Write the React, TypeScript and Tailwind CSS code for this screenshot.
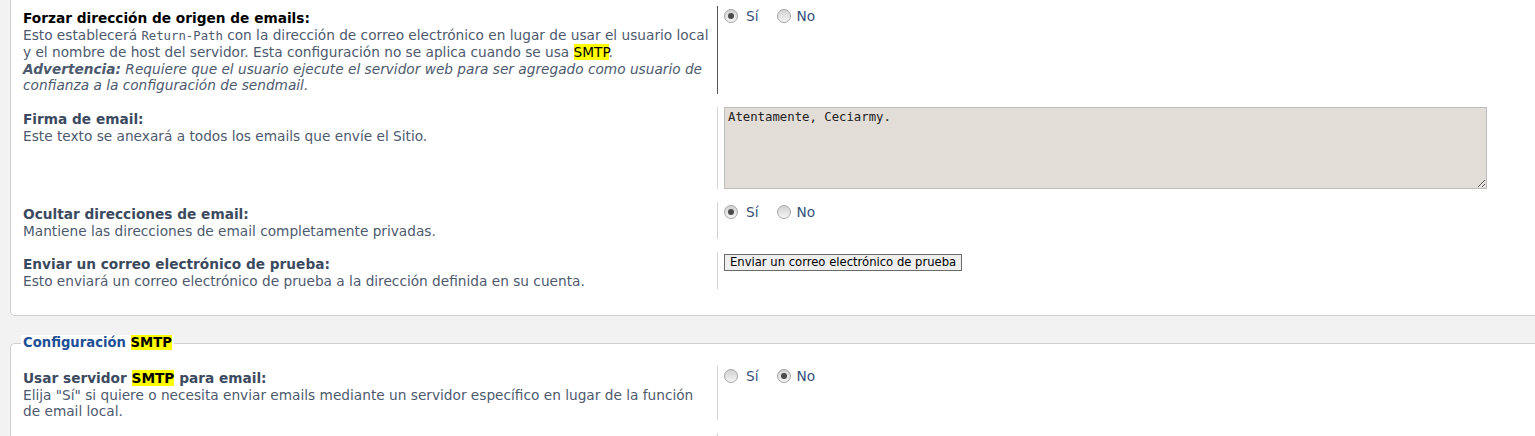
import type { ReactNode } from "react";

const sans = "font-['DejaVu_Sans','Verdana',sans-serif]";
const mono = "font-['DejaVu_Sans_Mono','Liberation_Mono',monospace]";

function Hl({ children }: { children: ReactNode }) {
  return <span className="bg-[#ffff00] text-black">{children}</span>;
}

function Radio({ checked }: { checked?: boolean }) {
  return (
    <span className="flex h-[14px] w-[14px] shrink-0 items-center justify-center rounded-full border border-[#a6a6a6] bg-gradient-to-b from-[#d2d2d2] to-[#f5f5f5]">
      {checked ? <span className="h-[6px] w-[6px] rounded-full bg-[#4a4a4a]" /> : null}
    </span>
  );
}

function YesNo({ value }: { value: "si" | "no" }) {
  return (
    <div className="mt-[2px] flex items-center text-[#34507a]">
      <Radio checked={value === "si"} />
      <span className="ml-[8px] mr-[18px]">Sí</span>
      <Radio checked={value === "no"} />
      <span className="ml-[6px]">No</span>
    </div>
  );
}

function Row({
  title,
  children,
  control,
  active,
}: {
  title: ReactNode;
  children: ReactNode;
  control: ReactNode;
  active?: boolean;
}) {
  return (
    <div className="flex [&+&]:mt-[13px]">
      <div className="w-[694px] shrink-0 pt-[4px]">
        <div className={`font-bold ${active ? "text-black" : "text-[#3c4a60]"}`}>{title}</div>
        <div className="whitespace-nowrap text-[#4d5a6e]">{children}</div>
      </div>
      <div className={`flex-1 border-l pl-[6px] ${active ? "border-[#555]" : "border-[#d3d3d3]"}`}>
        {control}
      </div>
    </div>
  );
}

export default function App() {
  return (
    <div className={`min-h-[436px] bg-[#f2f2f2] ${sans} text-[13.7px] leading-[16.6px]`}>
      <div className="ml-[10px] rounded-bl-[5px] border border-t-0 border-r-0 border-[#d0d0d0] bg-white pb-[26px] pl-[12px] pt-[6px]">
        <Row
          active
          title="Forzar dirección de origen de emails:"
          control={<YesNo value="si" />}
        >
          Esto establecerá <span className={`${mono} text-[12.3px]`}>Return-Path</span> con la
          dirección de correo electrónico en lugar de usar el usuario local
          <br />
          y el nombre de host del servidor. Esta configuración no se aplica cuando se usa{" "}
          <Hl>SMTP</Hl>.
          <br />
          <i>
            <b>Advertencia:</b> Requiere que el usuario ejecute el servidor web para ser agregado
            como usuario de
            <br />
            confianza a la configuración de sendmail.
          </i>
        </Row>

        <Row
          title="Firma de email:"
          control={
            <textarea
              defaultValue="Atentamente, Ceciarmy."
              className={`block h-[82px] w-[763px] border border-[#bdbdbd] bg-[#e2ddd6] px-[3px] py-[2px] ${mono} text-[12.3px] leading-[15px] text-[#222]`}
            />
          }
        >
          Este texto se anexará a todos los emails que envíe el Sitio.
        </Row>

        <Row title="Ocultar direcciones de email:" control={<YesNo value="si" />}>
          Mantiene las direcciones de email completamente privadas.
        </Row>

        <Row
          title="Enviar un correo electrónico de prueba:"
          control={
            <button className="mt-[2px] h-[17px] border border-[#6b6b6b] bg-[#efefef] px-[5px] text-[11.6px] leading-[15px] text-black">
              Enviar un correo electrónico de prueba
            </button>
          }
        >
          Esto enviará un correo electrónico de prueba a la dirección definida en su cuenta.
        </Row>
      </div>

      <fieldset className="ml-[10px] mt-[19px] rounded-tl-[5px] border border-r-0 border-b-0 border-[#d0d0d0] bg-white pl-[12px] pt-[14px]">
        <legend className="-ml-[2px] bg-white px-[2px] text-[13.2px] font-bold text-[#1f4f96]">
          Configuración <Hl>SMTP</Hl>
        </legend>
        <Row
          title={
            <>
              Usar servidor <Hl>SMTP</Hl> para email:
            </>
          }
          control={<YesNo value="no" />}
        >
          Elija "Sí" si quiere o necesita enviar emails mediante un servidor específico en lugar
          de la función
          <br />
          de email local.
        </Row>
        {/* next setting row starts just below the visible area */}
        <div className="mt-[13px] flex">
          <div className="h-[40px] w-[694px] shrink-0" />
          <div className="flex-1 border-l border-[#d3d3d3]" />
        </div>
      </fieldset>
    </div>
  );
}
